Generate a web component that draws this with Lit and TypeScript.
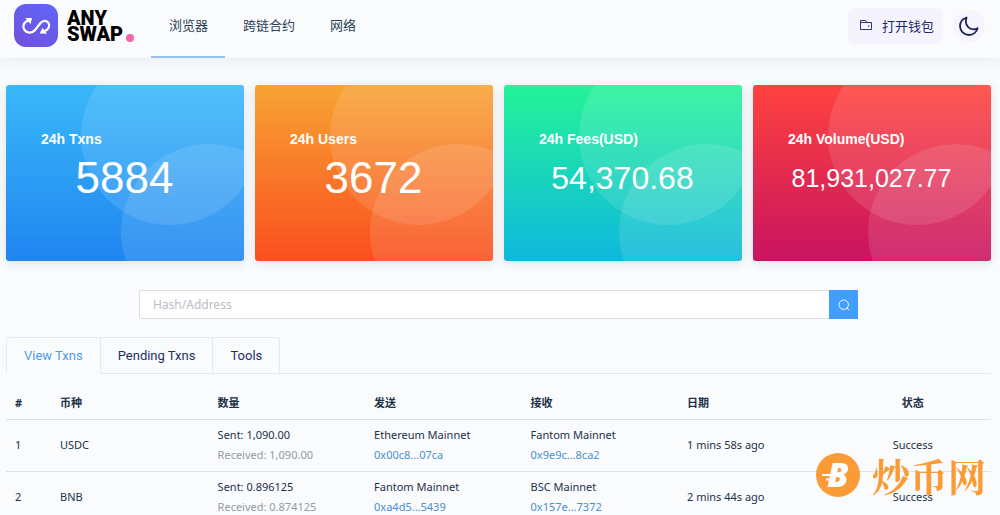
import { LitElement, html, css, svg } from "lit";
import { customElement, state } from "lit/decorators.js";

interface Txn {
  id: number;
  coin: string;
  sent: string;
  received: string;
  from: string;
  fromHash: string;
  to: string;
  toHash: string;
  date: string;
  status: string;
}

const STATS = [
  { label: "24h Txns", value: "5884", tone: "blue", size: "large" },
  { label: "24h Users", value: "3672", tone: "orange", size: "large" },
  { label: "24h Fees(USD)", value: "54,370.68", tone: "green", size: "medium" },
  { label: "24h Volume(USD)", value: "81,931,027.77", tone: "red", size: "small" },
];

const NAV = ["浏览器", "跨链合约", "网络"];
const TABS = ["View Txns", "Pending Txns", "Tools"];

const TXNS: Txn[] = [
  {
    id: 1, coin: "USDC", sent: "1,090.00", received: "1,090.00",
    from: "Ethereum Mainnet", fromHash: "0x00c8...07ca",
    to: "Fantom Mainnet", toHash: "0x9e9c...8ca2",
    date: "1 mins 58s ago", status: "Success",
  },
  {
    id: 2, coin: "BNB", sent: "0.896125", received: "0.874125",
    from: "Fantom Mainnet", fromHash: "0xa4d5...5439",
    to: "BSC Mainnet", toHash: "0x157e...7372",
    date: "2 mins 44s ago", status: "Success",
  },
];

@customElement("stat-card")
class StatCard extends LitElement {
  static properties = { label: {}, value: {}, tone: {}, size: {} };
  declare label: string;
  declare value: string;
  declare tone: string;
  declare size: string;

  static styles = css`
    :host { display: block; }
    .card {
      position: relative;
      overflow: hidden;
      box-sizing: border-box;
      min-height: 176px;
      padding: 45px 36px 0 35px;
      border-radius: 3px;
      color: #fff;
      font-family: "Liberation Sans", Arial, sans-serif;
    }
    .card::before, .card::after {
      content: "";
      position: absolute;
      border-radius: 50%;
      background: rgba(255, 255, 255, 0.115);
    }
    .card::before { width: 178px; height: 178px; top: -38px; right: -15px; }
    .card::after { width: 176px; height: 176px; top: 59px; right: -53px; }
    .blue { background: linear-gradient(#3ab8f9, #1f85f0); }
    .orange { background: linear-gradient(#f8a334, #fa4f1e); }
    .green { background: linear-gradient(#25f398, #0eb8dd); }
    .red { background: linear-gradient(#ff433e, #c81360); }
    .label {
      position: relative;
      z-index: 1;
      margin: 0;
      font-size: 14px;
      line-height: 18px;
      font-weight: 700;
    }
    .value {
      position: relative;
      z-index: 1;
      margin: 0 -24px;
      line-height: 60px;
      text-align: center;
    }
    .large { font-size: 44px; }
    .medium { font-size: 32px; }
    .small { font-size: 25px; }
  `;

  render() {
    return html`<section class="card ${this.tone}">
      <h2 class="label">${this.label}</h2>
      <p class="value ${this.size}">${this.value}</p>
    </section>`;
  }
}

@customElement("app-root")
class AppRoot extends LitElement {
  @state() private tab = 0;

  static styles = css`
    :host {
      display: block;
      min-height: 100vh;
      background: #f9fbfd;
      color: #1d3148;
      font-family: "Noto Sans", "Noto Sans CJK SC", sans-serif;
      font-size: 12px;
    }
    a { text-decoration: none; }
    button { font: inherit; cursor: pointer; }
    .header {
      display: flex;
      justify-content: space-between;
      align-items: center;
      height: 58px;
      padding: 0 15px 0 14px;
      background: #fafbfd;
      box-shadow: 0 4px 16px rgba(60, 70, 80, 0.08);
      box-sizing: border-box;
    }
    .left { display: flex; align-self: stretch; }
    .brand { display: flex; gap: 9px; width: 137px; padding-top: 4px; color: #000; }
    .mark { width: 44px; height: 44px; }
    .name {
      display: flex;
      align-items: flex-end;
      gap: 3px;
      height: 38px;
      font: 900 20px/16px Roboto, sans-serif;
    }
    .dot { width: 8px; height: 8px; border-radius: 50%; background: #f764ad; }
    .nav { display: flex; }
    .nav-link {
      display: flex;
      align-items: center;
      padding: 0 17px 7px 18px;
      border-bottom: 2px solid transparent;
      color: #2b4256;
      font-size: 13px;
    }
    .nav-link.active { border-color: #93c3ec; }
    .actions { display: flex; align-items: center; gap: 10px; padding-bottom: 6px; }
    .wallet {
      display: flex;
      align-items: center;
      gap: 9px;
      height: 36px;
      padding: 0 9px 2px 12px;
      border: 0;
      border-radius: 6px;
      background: #f5f3fd;
      color: #1f2a6b;
      font-size: 13px;
    }
    .theme {
      display: grid;
      place-items: center;
      width: 32px;
      height: 32px;
      padding: 0;
      border: 0;
      border-radius: 50%;
      background: #f6f5fd;
    }
    .main { padding: 27px 9px 0 6px; }
    .stats { display: grid; grid-template-columns: repeat(4, 1fr); gap: 11px; }
    .stat { border-radius: 3px; box-shadow: 0 2px 10px rgba(60, 70, 80, 0.14); }
    .search { display: flex; width: 73%; margin: 29px auto 0; height: 29px; }
    .input {
      flex: 1;
      min-width: 0;
      box-sizing: border-box;
      padding: 0 13px;
      border: 1px solid #dcdfe6;
      border-right: 0;
      border-radius: 2px 0 0 2px;
      background: #fff;
      font: inherit;
      color: inherit;
      outline: none;
    }
    .input::placeholder { color: #b9bdc5; opacity: 1; }
    .go { display: grid; place-items: center; width: 29px; padding: 0; border: 0; background: #409eff; }
    .tabs { display: flex; margin-top: 18px; border-bottom: 1px solid #e6e9ee; }
    .tab {
      height: 37px;
      margin-bottom: -1px;
      padding: 0 17px;
      border: 1px solid #e6e9ee;
      border-left-width: 0;
      background: #f9fbfd;
      color: #1f2f66;
      font-family: Roboto, "Liberation Sans", sans-serif;
      font-size: 13px;
    }
    .tab:first-child { border-left-width: 1px; border-top-left-radius: 3px; }
    .tab:last-child { border-top-right-radius: 3px; }
    .tab.active { color: #4f9be6; border-bottom-color: #f9fbfd; }
    .table { width: 100%; margin-top: 12px; border-collapse: collapse; table-layout: fixed; font-size: 11px; }
    .col-id { width: 45px; }
    .col-coin { width: 16%; }
    .table th, .table td {
      padding: 5px 9px 6px;
      border-bottom: 1px solid #dde1e6;
      text-align: left;
      line-height: 20px;
      white-space: nowrap;
    }
    .table th { padding: 7px 9px 6px; font-weight: 700; }
    .table .center { text-align: center; }
    .line { display: block; }
    .muted { color: #969a9f; }
    .hash { display: block; color: #4a90d0; }
    .badge {
      position: fixed;
      right: 14px;
      bottom: 14px;
      display: flex;
      align-items: center;
      gap: 12px;
      color: #fb9b35;
      font: 700 38px/52px "Noto Serif CJK SC", "Noto Sans CJK SC", serif;
      pointer-events: none;
    }
    .coin { overflow: visible; }
    .coin-letter { font: italic 800 34px "Open Sans", sans-serif; }
  `;

  private logo() {
    return svg`<svg class="mark" viewBox="0 0 44 44" aria-hidden="true">
      <defs><linearGradient id="g" x1="0.8" y1="0" x2="0.2" y2="1">
        <stop offset="0" stop-color="#5f66f6"/><stop offset="1" stop-color="#7350de"/>
      </linearGradient></defs>
      <rect width="44" height="43" rx="12" fill="url(#g)"/>
      <path d="M14.500 16.500C9.500 18 8 22.500 10.500 26c2.500 3.400 7 3.600 10.200.4l5.600-7.200c2.800-3.200 6.600-2.800 8.200-.3 1.800 3.200.2 6.800-4.700 8.600" fill="none" stroke="#fff" stroke-width="2.200" stroke-linecap="round"/>
      <path d="M11.200 14l6.800 0-1.400 6.300zM33 29.800l-7.200-.2 2.600-5.800z" fill="#fff"/>
    </svg>`;
  }

  private renderRow(t: Txn) {
    return html`<tr>
      <td>${t.id}</td>
      <td>${t.coin}</td>
      <td><span class="line">Sent: ${t.sent}</span><span class="line muted">Received: ${t.received}</span></td>
      <td><span class="line">${t.from}</span><a class="hash" href="#">${t.fromHash}</a></td>
      <td><span class="line">${t.to}</span><a class="hash" href="#">${t.toHash}</a></td>
      <td>${t.date}</td>
      <td class="center">${t.status}</td>
    </tr>`;
  }

  render() {
    return html`
      <header class="header">
        <div class="left">
          <a class="brand" href="#">
            ${this.logo()}
            <span class="name"><span>ANY<br />SWAP</span><span class="dot"></span></span>
          </a>
          <nav class="nav">
            ${NAV.map((n, i) => html`<a class="nav-link ${i === 0 ? "active" : ""}" href="#">${n}</a>`)}
          </nav>
        </div>
        <div class="actions">
          <button class="wallet" type="button">
            <svg width="13" height="12" viewBox="0 0 13 12" fill="none" stroke="#2b3570" aria-hidden="true">
              <path d="M.5 10.500v-9h5l1.500 2h4.500v7z"/>
              <path d="M.5 3.500h7"/>
              <circle cx="8.800" cy="7" r=".5" fill="#2b3570" stroke-width=".5"/>
            </svg>
            打开钱包
          </button>
          <button class="theme" type="button" aria-label="Theme">
            <svg width="20" height="20" viewBox="0 0 20 20" fill="none" stroke="#1d1f5c" stroke-width="1.800" stroke-linejoin="round" aria-hidden="true">
              <path d="M7.600 1.500C3.800 2.700 1 6 1 10.100 1 15 5 19 9.900 19c4.200 0 7.700-2.900 8.700-6.800-1.300.8-2.600 1.100-4 1.100-4.300 0-7.700-3.400-7.700-7.600 0-1.500.2-2.900.7-4.200z"/>
            </svg>
          </button>
        </div>
      </header>
      <main class="main">
        <div class="stats">
          ${STATS.map((s) => html`<stat-card class="stat" .label=${s.label} .value=${s.value} .tone=${s.tone} .size=${s.size}></stat-card>`)}
        </div>
        <form class="search" @submit=${(e: Event) => e.preventDefault()}>
          <input class="input" type="text" placeholder="Hash/Address" aria-label="Hash/Address" />
          <button class="go" type="submit" aria-label="Search">
            <svg width="12" height="12" viewBox="0 0 12 12" fill="none" stroke="#fff" aria-hidden="true">
              <circle cx="5.700" cy="5.700" r="4.700"/><path d="M9 9l2 2"/>
            </svg>
          </button>
        </form>
        <div class="tabs" role="tablist">
          ${TABS.map((t, i) => html`<button
            class="tab ${i === this.tab ? "active" : ""}" type="button" role="tab"
            aria-selected=${i === this.tab ? "true" : "false"}
            @click=${() => { this.tab = i; }}>${t}</button>`)}
        </div>
        <table class="table">
          <colgroup><col class="col-id" /><col class="col-coin" /><col /><col /><col /><col /><col /></colgroup>
          <thead>
            <tr><th>#</th><th>币种</th><th>数量</th><th>发送</th><th>接收</th><th>日期</th><th class="center">状态</th></tr>
          </thead>
          <tbody>${TXNS.map((t) => this.renderRow(t))}</tbody>
        </table>
      </main>
      <aside class="badge">
        <svg class="coin" width="44" height="44" viewBox="0 0 44 44" aria-hidden="true">
          <circle cx="22" cy="22" r="22" fill="#fb9b35"/>
          <text class="coin-letter" x="11" y="34" fill="#fff">B</text>
          <path d="M6 22h10M10 26.500h9" fill="none" stroke="#fff" stroke-width="1.800"/>
        </svg>
        <span>炒币网</span>
      </aside>
    `;
  }
}
